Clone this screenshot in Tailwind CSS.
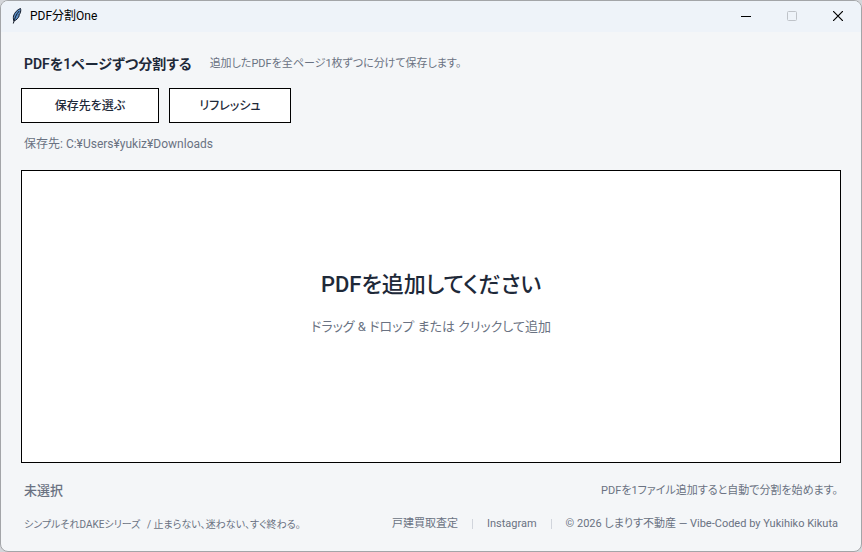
<!DOCTYPE html>
<html lang="ja">
<head>
  <meta charset="UTF-8" />
  <meta name="viewport" content="width=device-width, initial-scale=1.0"/>
  <title>PDF分割One</title>
  <script src="https://cdn.jsdelivr.net/npm/@tailwindcss/browser@4"></script>
</head>
<body class="bg-[#d4d6da] font-['Roboto','Noto_Sans_CJK_JP',sans-serif] [font-feature-settings:'palt'] text-gray-500">
  <div class="flex flex-col min-h-screen bg-[#f4f6f8] border border-[#a3a5a8] rounded-lg overflow-hidden">

    <!-- Title bar -->
    <header class="flex items-center h-[31px] pb-[2px] bg-[#eef3f9] text-black">
      <svg class="ml-[10px] w-3 h-4" viewBox="0 0 12 16">
        <path d="M9.5 0.5C6.5 1.5 3.5 4.5 2.5 8C2.2 10 2.4 12 3 13C5.5 12 7.5 10 8.3 7.5L7.7 7.2L9 5.5C9.8 3.5 10 2 9.5 0.5Z" fill="#5c8fc6" stroke="#111827" stroke-width="1"/>
        <path d="M8.2 3C5.5 6 3.8 9.5 2.3 15.5" fill="none" stroke="#111827" stroke-width="1"/>
      </svg>
      <h1 class="ml-[7px] text-xs">PDF分割One</h1>
      <div class="ml-auto flex h-full">
        <button type="button" aria-label="最小化" class="w-[46px] flex items-center justify-center">
          <svg class="w-[10px] h-[10px]" viewBox="0 0 10 10"><path d="M0 5.5H10" stroke="#000" fill="none"/></svg>
        </button>
        <button type="button" aria-label="最大化" disabled class="w-[46px] flex items-center justify-center">
          <svg class="w-[10px] h-[10px]" viewBox="0 0 10 10"><rect x="0.5" y="0.5" width="9" height="9" rx="1" stroke="#bfc3c9" fill="none"/></svg>
        </button>
        <button type="button" aria-label="閉じる" class="w-[46px] flex items-center justify-center">
          <svg class="w-[10px] h-[10px]" viewBox="0 0 10 10"><path d="M0 0L10 10M10 0L0 10" stroke="#000" stroke-width="1.2" fill="none"/></svg>
        </button>
      </div>
    </header>

    <main class="flex flex-col flex-1 px-5 pt-5">
      <div class="flex items-center gap-[18px] h-6 pl-[3px]">
        <h2 class="text-sm font-semibold text-gray-800">PDFを1ページずつ分割する</h2>
        <p class="text-[11px]">追加したPDFを全ページ1枚ずつに分けて保存します。</p>
      </div>

      <div class="flex gap-[10px] mt-3">
        <button type="button" class="w-[138px] h-[35px] pt-px bg-white border border-black text-xs font-medium text-gray-800">保存先を選ぶ</button>
        <button type="button" class="w-[122px] h-[35px] pt-px bg-white border border-black text-xs font-medium text-gray-800">リフレッシュ</button>
      </div>

      <p class="mt-3 pl-[3px] text-xs leading-[18px]">保存先: C:¥Users¥yukiz¥Downloads</p>

      <!-- Drop area -->
      <button type="button" class="flex flex-col flex-1 items-center justify-center gap-3 mt-[17px] pb-[27px] bg-white border border-black">
        <span class="text-[22px] leading-9 font-medium text-gray-800">PDFを追加してください</span>
        <span class="text-[13px] leading-6">ドラッグ &amp; ドロップ または クリックして追加</span>
      </button>

      <div class="flex items-center justify-between h-5 mt-[18px] px-[3px]">
        <p class="text-[13px] font-medium">未選択</p>
        <p class="text-[11px]">PDFを1ファイル追加すると自動で分割を始めます。</p>
      </div>
    </main>

    <footer class="flex items-center justify-between h-5 mt-[13px] mb-[17px] px-[23px]">
      <p class="text-[10px]">シンプルそれDAKEシリーズ <span class="ml-1">/ 止まらない、迷わない、すぐ終わる。</span></p>
      <div class="flex items-center gap-[14px] text-[11px]">
        <a href="#">戸建買取査定</a>
        <span class="w-px h-[10px] bg-gray-300"></span>
        <a href="#">Instagram</a>
        <span class="w-px h-[10px] bg-gray-300"></span>
        <p>© 2026 しまりす不動産 — Vibe-Coded by Yukihiko Kikuta</p>
      </div>
    </footer>
  </div>
</body>
</html>
